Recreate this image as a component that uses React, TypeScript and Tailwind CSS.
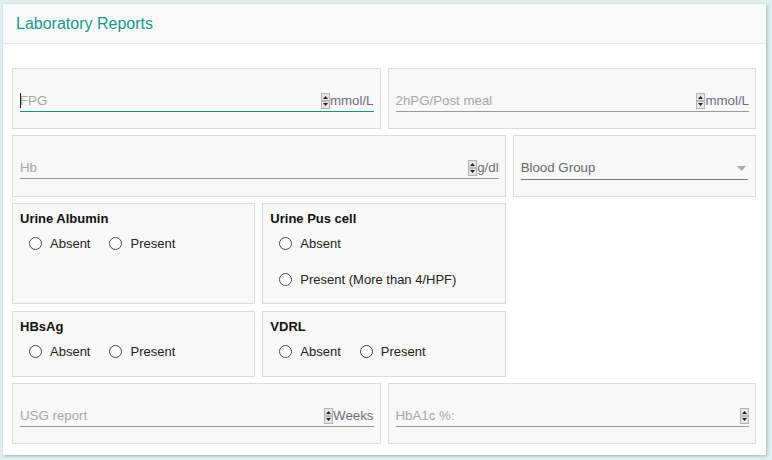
import React from "react";

const Spinner = () => (
	<svg width="9" height="16" viewBox="0 0 9 16" className="shrink-0">
		<rect x="0.5" y="0.5" width="8" height="7" fill="#e6e6e6" stroke="#b5b5b5" />
		<rect x="0.5" y="8.5" width="8" height="7" fill="#e6e6e6" stroke="#b5b5b5" />
		<path d="M2 6 L4.5 3 L7 6 Z" fill="#222" />
		<path d="M2 10 L4.5 13 L7 10 Z" fill="#222" />
	</svg>
);

const NumberField = ({
	label,
	unit,
	focused,
	className = "",
}: {
	label: string;
	unit?: string;
	focused?: boolean;
	className?: string;
}) => (
	<div className={`h-[61px] border border-[#dcdcdc] bg-[#f8f8f8] pl-[7px] pr-[6px] pt-[21px] ${className}`}>
		<div
			className={`relative flex h-[22px] items-center border-b ${focused ? "border-[#1e8a80]" : "border-[#9a9a9a]"}`}
		>
			{focused && <span className="absolute left-0 top-[3px] h-[15px] w-px bg-[#222]" />}
			<span className="flex-1 text-[13.3px] text-[#a6a6a6]">{label}</span>
			<Spinner />
			{unit && <span className="text-[13.3px] text-[#6d6d80]">{unit}</span>}
		</div>
	</div>
);

const Radio = ({ label }: { label: string }) => (
	<label className="flex items-center gap-[8px] text-[13px] text-[#222]">
		<span className="h-[13px] w-[13px] rounded-full border border-[#444] bg-white" />
		{label}
	</label>
);

const RadioGroup = ({
	title,
	options,
	stacked,
	className = "",
}: {
	title: string;
	options: string[];
	stacked?: boolean;
	className?: string;
}) => (
	<div className={`border border-[#dcdcdc] bg-[#f8f8f8] px-[7px] pt-[5px] ${className}`}>
		<div className="text-[13px] font-bold text-[#111]">{title}</div>
		<div className={`mt-[5px] flex pl-[9px] ${stacked ? "flex-col gap-[17px]" : "gap-[19px]"}`}>
			{options.map((o) => (
				<Radio key={o} label={o} />
			))}
		</div>
	</div>
);

export default function App() {
	return (
		<div className="h-[460px] w-full bg-[#ddefee] pl-[3px] pr-[6px] pt-[4px] font-['Liberation_Sans',Arial,sans-serif]">
			<div className="h-[451px] bg-white shadow-[1px_1px_3px_rgba(0,0,0,0.25)]">
				<div className="flex h-[40px] items-center border-b border-[#e6e6e6] bg-[#f9f9f9] pl-[13px]">
					<h1 className="text-[16px] text-[#1a968c]">Laboratory Reports</h1>
				</div>
				<div className="flex flex-col gap-[6px] pl-[9px] pr-[10px] pt-[24px]">
					<div className="grid grid-cols-2 gap-x-[7px]">
						<NumberField label="FPG" unit="mmol/L" focused />
						<NumberField label="2hPG/Post meal" unit="mmol/L" />
					</div>
					<div className="grid grid-cols-3 gap-x-[7px]">
						<NumberField label="Hb" unit="g/dl" className="col-span-2 h-[62px]" />
						<div className="h-[62px] border border-[#dcdcdc] bg-[#f8f8f8] pl-[7px] pr-[7px] pt-[21px]">
							<div className="flex h-[23px] items-center border-b border-[#777]">
								<span className="flex-1 text-[13.3px] text-[#666]">Blood Group</span>
								<svg width="9" height="5" viewBox="0 0 9 5" className="mr-[2px]">
									<path d="M0 0 L9 0 L4.5 5 Z" fill="#aaa" />
								</svg>
							</div>
						</div>
					</div>
					<div className="grid grid-cols-3 gap-x-[7px]">
						<RadioGroup title="Urine Albumin" options={["Absent", "Present"]} className="h-[101px]" />
						<RadioGroup
							title="Urine Pus cell"
							options={["Absent", "Present (More than 4/HPF)"]}
							stacked
							className="h-[101px]"
						/>
					</div>
					<div className="mt-[1px] grid grid-cols-3 gap-x-[7px]">
						<RadioGroup title="HBsAg" options={["Absent", "Present"]} className="h-[66px]" />
						<RadioGroup title="VDRL" options={["Absent", "Present"]} className="h-[66px]" />
					</div>
					<div className="grid grid-cols-2 gap-x-[7px]">
						<NumberField label="USG report" unit="Weeks" />
						<NumberField label="HbA1c %:" />
					</div>
				</div>
			</div>
		</div>
	);
}
